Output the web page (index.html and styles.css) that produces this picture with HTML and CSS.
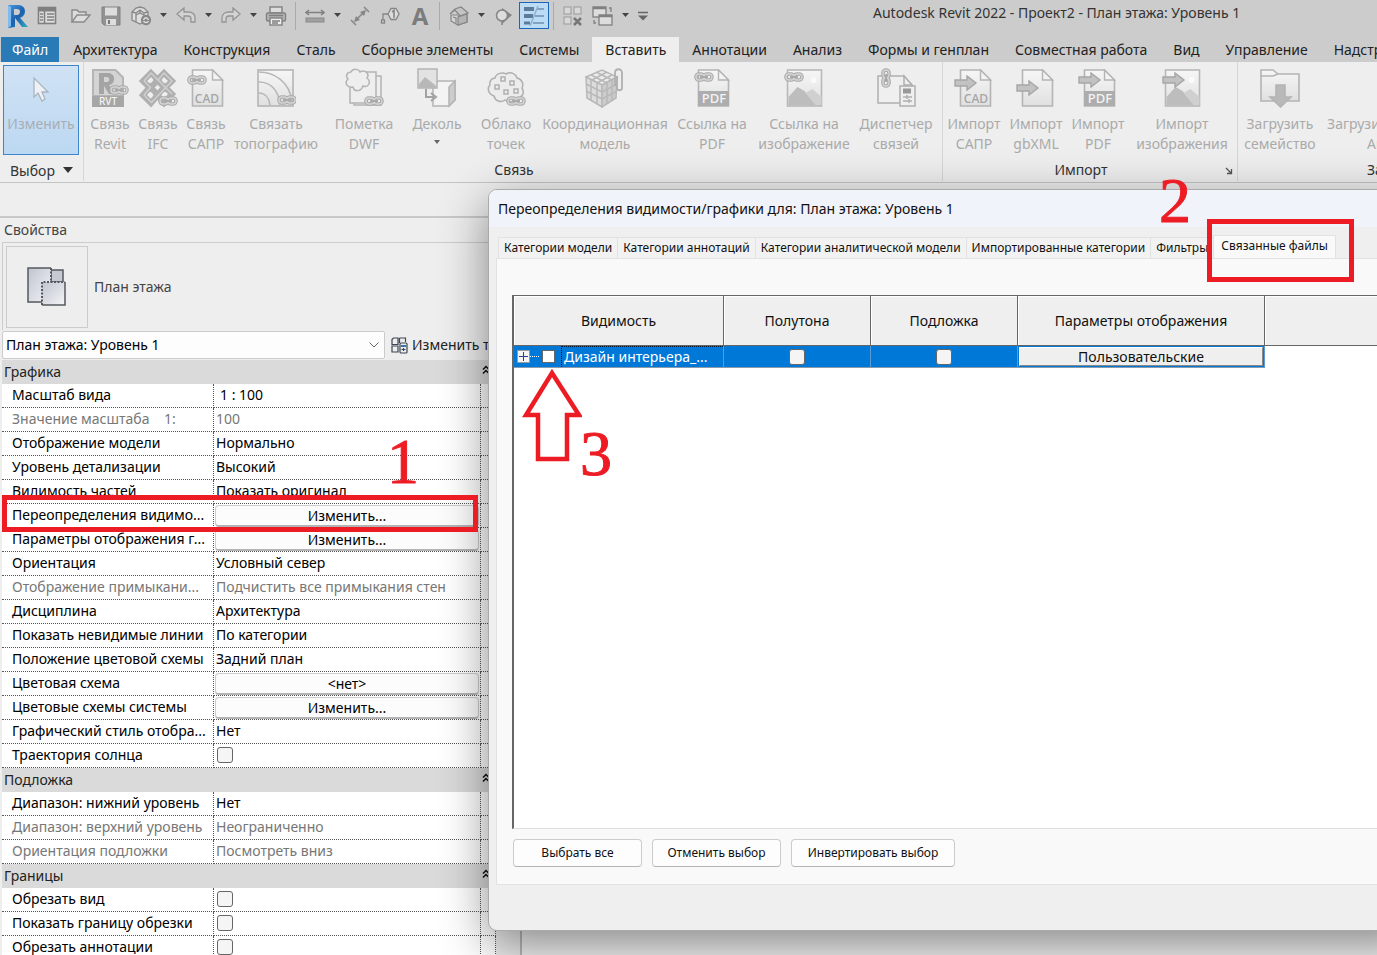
FILE: index.html
```html
<!DOCTYPE html>
<html lang="ru">
<head>
    <meta charset="UTF-8">
    <meta name="viewport" content="width=device-width, initial-scale=1.0">
    <title>Autodesk Revit 2022 - Проект2 - План этажа: Уровень 1</title>
    <link rel="stylesheet" href="styles.css">
</head>
<body>
    <!-- shared icon parts -->
    <svg class="defs" width="0" height="0">
        <defs>
            <linearGradient id="fade" x1="0" y1="0" x2="0" y2="1">
                <stop offset="0" stop-color="#f6f6f6"/>
                <stop offset="1" stop-color="#e0e0e0"/>
            </linearGradient>
            <linearGradient id="logo" x1="0" y1="0" x2="1" y2="1">
                <stop offset="0" stop-color="#4a9be0"/>
                <stop offset="0.5" stop-color="#1c5fae"/>
                <stop offset="1" stop-color="#2fb0c8"/>
            </linearGradient>
            <linearGradient id="plan" x1="0" y1="0" x2="1" y2="1">
                <stop offset="0" stop-color="#bfc4cf"/>
                <stop offset="1" stop-color="#f4f5f7"/>
            </linearGradient>
            <symbol id="chain" viewBox="0 0 20 10">
                <g fill="none" stroke="#aaa" stroke-width="3.6">
                    <rect x="2" y="2" width="8" height="6" rx="3"/>
                    <rect x="10" y="2" width="8" height="6" rx="3"/>
                </g>
                <g fill="none" stroke="#d4d4d4" stroke-width="1.4">
                    <rect x="2" y="2" width="8" height="6" rx="3"/>
                    <rect x="10" y="2" width="8" height="6" rx="3"/>
                </g>
                <path d="M6 5h8" stroke="#aaa" stroke-width="2"/>
            </symbol>
            <symbol id="page" viewBox="0 0 32 38">
                <path d="M1 1h20l10 10v26H1z" fill="url(#fade)" stroke="#b4b4b4" stroke-width="1.6"/>
                <path d="M21 1v10h10z" fill="#f3f3f3" stroke="#b4b4b4" stroke-width="1.4"/>
            </symbol>
            <symbol id="arrow-in" viewBox="0 0 24 16">
                <path d="M1 5h12V1l9 7-9 7v-4H1z" fill="#c2c2c2" stroke="#a6a6a6" stroke-width="1.4"/>
            </symbol>
            <symbol id="photo" viewBox="0 0 36 38">
                <rect x="1" y="1" width="34" height="36" fill="url(#fade)" stroke="#b8b8b8" stroke-width="1.6"/>
                <circle cx="27" cy="11" r="3" fill="#fafafa"/>
                <path d="M2 28l9-10 7 4 12 14H2z" fill="#bdbdbd"/>
                <path d="M19 24l7-4 9 8v8h-6z" fill="#d0d0d0"/>
            </symbol>
            <symbol id="down" viewBox="0 0 8 5">
                <path d="M0 0h7L3.500 4z" fill="#444"/>
            </symbol>
            <symbol id="fold" viewBox="0 0 8 10">
                <path d="M1 4.500l3-3 3 3M1 8.500l3-3 3 3" fill="none" stroke="#111" stroke-width="1.500"/>
            </symbol>
        </defs>
    </svg>

    <div class="app">
        <header class="titlebar">
            <div class="quick-access">
                <button class="qa" aria-label="Revit">
                    <svg width="24" height="26" viewBox="0 0 24 26"><path d="M3 2h10c5 0 7 3 7 6.500 0 3-2 5.500-5 6.300L23 24h-6l-7-9v9l-7 1z" fill="url(#logo)"/><path d="M9 6h3c2 0 3 1 3 2.700S14 12 12 12H9z" fill="#ccc"/><path d="M3 2l3 2v19l-3 2z" fill="#7fbbee"/></svg>
                </button>
                <button class="qa" aria-label="Начальная страница">
                    <svg width="20" height="20" viewBox="0 0 20 20" fill="none" stroke="#808080"><rect x="1.500" y="1.500" width="17" height="16" fill="#ddd" stroke-width="1.600"/><path d="M2 3.500h16" stroke-width="4"/><path d="M7.500 5v12M3 8h3M3 11h3M3 14h3M10 8h7M10 11h7M10 14h7" stroke-width="1.600"/></svg>
                </button>
                <button class="qa qa-gap" aria-label="Открыть">
                    <svg width="22" height="18" viewBox="0 0 22 18" fill="#ddd" stroke="#8a8a8a" stroke-width="1.400"><path d="M2 15V3h5l2 2h7v3"/><path d="M2 15L7 8h13l-6 7z"/></svg>
                </button>
                <button class="qa" aria-label="Сохранить">
                    <svg width="20" height="20" viewBox="0 0 20 20"><path d="M1 1h18v18H3l-2-2z" fill="#929292" stroke="#808080"/><rect x="4" y="1.500" width="12" height="8" fill="#ddd"/><rect x="5" y="13" width="10" height="6" fill="#ddd"/><rect x="7" y="14" width="2" height="4" fill="#777"/></svg>
                </button>
                <button class="qa" aria-label="Синхронизировать">
                    <svg width="22" height="20" viewBox="0 0 22 20" fill="#ddd" stroke="#888" stroke-width="1.300"><path d="M2 6l4-4 4-1 4 1 4 4v8l-8 4-8-4z"/><path d="M2 6l4 1 4-3 4 3 4-1M6 7v9M14 7v7M10 4v4M6 9l4-2 4 2"/><circle cx="16" cy="14" r="4.500" fill="#888"/><path d="M13.500 14c1-3 4-3 5 0M18.500 15c-1 2-4 2-5 0" fill="none" stroke="#ddd"/></svg>
                </button>
                <button class="qa-drop" aria-label="Список"><svg width="8" height="5"><use href="#down"/></svg></button>
                <button class="qa" aria-label="Отменить">
                    <svg width="20" height="18" viewBox="0 0 20 18"><path d="M1 7l7-6v4h4c4 0 7 2 7 6v4h-4v-3c0-2-1-3-3-3H8v4z" fill="#d4d4d4" stroke="#949494" stroke-width="1.300"/></svg>
                </button>
                <button class="qa-drop" aria-label="Список"><svg width="8" height="5"><use href="#down"/></svg></button>
                <button class="qa" aria-label="Повторить">
                    <svg width="20" height="18" viewBox="0 0 20 18"><path d="M19 7l-7-6v4H8c-4 0-7 2-7 6v4h4v-3c0-2 1-3 3-3h4v4z" fill="#d4d4d4" stroke="#949494" stroke-width="1.300"/></svg>
                </button>
                <button class="qa-drop" aria-label="Список"><svg width="8" height="5"><use href="#down"/></svg></button>
                <button class="qa" aria-label="Печать">
                    <svg width="22" height="20" viewBox="0 0 22 20" stroke="#808080" stroke-width="1.400"><rect x="5" y="1" width="12" height="6" fill="#ddd"/><rect x="1.500" y="7" width="19" height="8" rx="1.500" fill="#b5b5b5"/><rect x="5" y="12" width="12" height="7" fill="#eee"/><path d="M4 9.500h14M7 15h8M7 17h6"/></svg>
                </button>
                <span class="qa-sep"></span>
                <button class="qa" aria-label="Измерить">
                    <svg width="20" height="14" viewBox="0 0 20 14"><path d="M1 3.500h18M4 1L1 3.500 4 6M16 1l3 2.500L16 6" fill="none" stroke="#808080" stroke-width="1.500"/><rect x="1" y="9" width="18" height="4" fill="#a0a0a0" stroke="#8a8a8a"/></svg>
                </button>
                <button class="qa-drop" aria-label="Список"><svg width="8" height="5"><use href="#down"/></svg></button>
                <button class="qa" aria-label="Размер">
                    <svg width="20" height="20" viewBox="0 0 20 20" fill="none" stroke="#858585" stroke-width="1.500"><path d="M5 15L15 5M1 14l5 5M14 1l5 5"/><path d="M16 4l-6 2 4 4zM4 16l2-6 4 4z" fill="#858585" stroke="none"/></svg>
                </button>
                <button class="qa" aria-label="Марка по категории">
                    <svg width="20" height="18" viewBox="0 0 20 18" fill="none" stroke="#858585" stroke-width="1.300"><path d="M8 7H3v6"/><rect x="1.500" y="13" width="3" height="3"/><path d="M8 7l3-5.500h5L19 7l-3 5.500h-5z" fill="#ddd"/><path d="M12 5l2-1.500V11" stroke-width="1.600"/></svg>
                </button>
                <button class="qa qa-letter">A</button>
                <span class="qa-sep"></span>
                <button class="qa" aria-label="3D вид">
                    <svg width="20" height="20" viewBox="0 0 20 20" stroke="#858585" stroke-width="1.200"><path d="M2 9v6l7 4 9-3V9z" fill="#d4d4d4"/><path d="M1 8l5-5 6-2 7 6-8 3-5-6z" fill="#c4c4c4"/><path d="M9 19v-8l9-3v8z" fill="#b4b4b4"/><path d="M4 11l3 1v5" fill="none"/></svg>
                </button>
                <button class="qa-drop" aria-label="Список"><svg width="8" height="5"><use href="#down"/></svg></button>
                <button class="qa" aria-label="Разрез">
                    <svg width="18" height="18" viewBox="0 0 18 18"><path d="M7 1l10 7-10 9z" fill="#858585"/><circle cx="7" cy="8.500" r="5.500" fill="#ddd" stroke="#858585" stroke-width="1.500"/><path d="M7 14v4" stroke="#858585" stroke-width="1.500"/></svg>
                </button>
                <button class="qa qa-active" aria-label="Тонкие линии">
                    <svg width="22" height="20" viewBox="0 0 22 20"><path d="M1 3h10M1 10h9" stroke="#5c7a99" stroke-width="4"/><path d="M1 17h6" stroke="#5c7a99" stroke-width="3"/><path d="M14 3h7M12 10h9M10 17h11" stroke="#6d8fb0" stroke-width="1.500"/><path d="M15 0L7 20" stroke="#8fb0d0" stroke-width="1.500"/></svg>
                </button>
                <span class="qa-sep"></span>
                <button class="qa" aria-label="Закрыть неактивные">
                    <svg width="20" height="20" viewBox="0 0 20 20" fill="#d8d8d8" stroke="#999"><rect x="1" y="1" width="7" height="7"/><rect x="11" y="1" width="7" height="7"/><rect x="1" y="11" width="7" height="7"/><path d="M11 12l7 7M18 12l-7 7" stroke="#777" stroke-width="2.500"/></svg>
                </button>
                <button class="qa" aria-label="Переключить окна">
                    <svg width="22" height="20" viewBox="0 0 22 20" fill="#ddd" stroke="#808080" stroke-width="1.300"><rect x="1" y="1" width="13" height="10"/><path d="M1 2h13" stroke-width="2.500"/><rect x="7" y="9" width="13" height="10"/><path d="M7 10h13" stroke-width="2.500"/><path d="M17 2h2v4M2 14v3h2" fill="none"/></svg>
                </button>
                <button class="qa-drop" aria-label="Список"><svg width="8" height="5"><use href="#down"/></svg></button>
                <button class="qa-more" aria-label="Настройка панели"><svg width="12" height="10"><path d="M1 1.500h10" stroke="#666" stroke-width="1.500"/><path d="M1 4.500h10L6 9.500z" fill="#666"/></svg></button>
            </div>
            <div class="app-title">Autodesk Revit 2022 - Проект2 - План этажа: Уровень 1</div>
        </header>

        <nav class="ribbon-tabs">
            <button class="ribbon-tab file">Файл</button>
            <button class="ribbon-tab">Архитектура</button>
            <button class="ribbon-tab">Конструкция</button>
            <button class="ribbon-tab">Сталь</button>
            <button class="ribbon-tab">Сборные элементы</button>
            <button class="ribbon-tab">Системы</button>
            <button class="ribbon-tab current">Вставить</button>
            <button class="ribbon-tab">Аннотации</button>
            <button class="ribbon-tab">Анализ</button>
            <button class="ribbon-tab">Формы и генплан</button>
            <button class="ribbon-tab">Совместная работа</button>
            <button class="ribbon-tab">Вид</button>
            <button class="ribbon-tab">Управление</button>
            <button class="ribbon-tab">Надстройки</button>
        </nav>

        <section class="ribbon">
            <div class="panel panel-select">
                <button class="modify">
                    <svg width="20" height="28" viewBox="0 0 20 28"><path d="M3 2v19l4-4 4 8 3-2-3-7h6z" fill="#eef2f6" stroke="#a9b4bf" stroke-width="1.300"/></svg>
                    <span>Изменить</span>
                </button>
                <div class="panel-title">Выбор <svg width="10" height="8"><path d="M0 0h10L5 6z" fill="#333"/></svg></div>
            </div>

            <div class="panel panel-link">
                <div class="tools">
                    <button class="tool tool-s">
                        <svg width="40" height="40" viewBox="0 0 40 40"><path d="M2 1h24l8 8v29H2z" fill="#b5b5b5"/><path d="M4 3h21l7 7v17H4z" fill="#d4d4d4"/><path d="M9 5h9c8 0 8 11 1 12l6 9h-6l-5-8v8H9zM14 9v5h3c3 0 3-5 0-5z" fill="#a4a4a4" fill-rule="evenodd"/><rect x="2" y="28" width="32" height="11" fill="#a6a6a6"/><text x="18" y="37" class="icon-text on-dark" font-size="10">RVT</text><use href="#chain" x="19" y="17" width="20" height="10"/></svg>
                        <span>Связь<br>Revit</span>
                    </button>
                    <button class="tool tool-s">
                        <svg width="40" height="40" viewBox="0 0 40 40" fill="none"><g stroke="#b0b0b0" stroke-width="6"><path d="M13 5l7 7-8 8-7-7z"/><path d="M26 5l8 8-7 7-8-8z"/><path d="M12 19l8 8-7 8-8-8z"/><path d="M27 19l7 7-8 9-7-8z"/></g><path d="M6 13l7-8 21 21M20 12l6-7 8 8-21 22M12 20L6 27l7 7M6 13l7 7" stroke="#d0d0d0" stroke-width="1.400"/><use href="#chain" x="20" y="28" width="20" height="10"/></svg>
                        <span>Связь<br>IFC</span>
                    </button>
                    <button class="tool tool-s">
                        <svg width="40" height="40" viewBox="0 0 40 40"><use href="#page" x="5" y="1" width="33" height="38"/><use href="#chain" x="1" y="7" width="20" height="10"/><text x="21" y="35" class="icon-text" font-size="12">CAD</text></svg>
                        <span>Связь<br>САПР</span>
                    </button>
                    <button class="tool tool-xl">
                        <svg width="40" height="40" viewBox="0 0 40 40"><rect x="2" y="2" width="35" height="36" fill="url(#fade)" stroke="#b4b4b4" stroke-width="1.600"/><path d="M3 4c14 0 31 9 33 30M3 14c12 0 20 9 21 23M3 25c6 0 10 5 11 12" fill="none" stroke="#b8b8b8" stroke-width="1.600"/><use href="#chain" x="21" y="27" width="20" height="10"/></svg>
                        <span>Связать<br>топографию</span>
                    </button>
                    <button class="tool tool-l">
                        <svg width="40" height="40" viewBox="0 0 40 40" fill="#eee" stroke="#b4b4b4" stroke-width="1.500"><path d="M14 8h23v29H10V9z"/><path d="M8 4h24v31H6V20z"/><path d="M7 4c2-4 8-3 9 0 5-3 10 2 7 6 5 4 1 10-4 8-2 6-9 6-10 1-6 1-9-4-5-8-3-3-1-7 3-7z"/><use href="#chain" x="20" y="28" width="20" height="10"/></svg>
                        <span>Пометка<br>DWF</span>
                    </button>
                    <button class="tool tool-m">
                        <svg width="40" height="40" viewBox="0 0 40 40" stroke="#b4b4b4" stroke-width="1.500"><path d="M16 19l5-6h17v19l-6 6H16z" fill="#f3f3f3"/><path d="M32 19l6-6v19l-6 6z" fill="#ccc"/><rect x="1" y="1" width="19" height="19" fill="#e2e2e2"/><path d="M2 16l6-7 5 4 6 5v2H2z" fill="#b8b8b8" stroke="none"/><path d="M9 21v8h8M14 25l5 4-5 4" fill="none" stroke="#a2a2a2" stroke-width="2"/></svg>
                        <span>Деколь</span>
                        <svg width="8" height="5"><path d="M1 0h6L4 4z" fill="#666"/></svg>
                    </button>
                    <button class="tool tool-cloud">
                        <svg width="40" height="40" viewBox="0 0 40 40" fill="#ececec" stroke="#b0b0b0" stroke-width="1.500"><path d="M9 10c1-5 8-6 11-4 5-3 10 0 11 4 5 1 7 6 5 10 3 5 0 10-5 10-2 4-8 5-12 2-4 3-10 1-11-4-6-2-7-8-4-11-1-4 2-7 5-7z"/><path d="M15 9h4v4h-4zM24 13h4v4h-4zM9 17h4v4H9zM18 22h4v4h-4zM28 21h4v4h-4z"/><use href="#chain" x="20" y="28" width="20" height="10"/></svg>
                        <span>Облако<br>точек</span>
                    </button>
                    <button class="tool tool-coord">
                        <svg width="40" height="40" viewBox="0 0 40 40" stroke="#b8b8b8" stroke-width="1.500"><path d="M1 9l16-7 15 7-15 8z" fill="#ececec"/><path d="M1 9l16 8v22L2 30z" fill="#dcdcdc"/><path d="M32 9l-15 8v22l14-9z" fill="#ccc"/><path d="M6 7l16 8M11 4l16 8M27 7l-15 8M22 4L7 12M6 12v21M12 15v21M22 14v22M27 12v21M1 16l16 8 15-8M1 23l16 8 15-8" fill="none"/><path d="M32 8v12c0 3 5 3 5 0V5c0-5-7-5-7 0v13" fill="none" stroke="#b0b0b0" stroke-width="1.800"/></svg>
                        <span>Координационная<br>модель</span>
                    </button>
                    <button class="tool tool-xl">
                        <svg width="40" height="40" viewBox="0 0 40 40"><use href="#page" x="5" y="1" width="33" height="38"/><rect x="6" y="23" width="31" height="15" fill="#adadad"/><text x="22" y="35" class="icon-text on-dark" font-size="13">PDF</text><use href="#chain" x="2" y="4" width="20" height="10"/></svg>
                        <span>Ссылка на<br>PDF</span>
                    </button>
                    <button class="tool tool-xl">
                        <svg width="40" height="40" viewBox="0 0 40 40"><use href="#photo" x="2" y="1" width="37" height="38"/><use href="#chain" x="0" y="4" width="20" height="10"/></svg>
                        <span>Ссылка на<br>изображение</span>
                    </button>
                    <button class="tool tool-xl">
                        <svg width="40" height="40" viewBox="0 0 40 40" fill="#efefef" stroke="#b0b0b0" stroke-width="1.500"><path d="M2 8h26l8 9v18H2z"/><path d="M28 8v9h8z"/><rect x="24" y="18" width="15" height="20"/><path d="M27 23h8" stroke="#999" stroke-width="5"/><path d="M27 29h9M27 33h9M31 27v4M33 31v4"/><g transform="translate(15 0) rotate(90)"><use href="#chain" width="20" height="10"/></g></svg>
                        <span>Диспетчер<br>связей</span>
                    </button>
                </div>
                <div class="panel-title">Связь</div>
            </div>

            <div class="panel panel-import">
                <div class="tools">
                    <button class="tool tool-m">
                        <svg width="40" height="40" viewBox="0 0 40 40"><use href="#page" x="5" y="1" width="33" height="38"/><use href="#arrow-in" x="0" y="7" width="24" height="16"/><text x="22" y="35" class="icon-text" font-size="12">CAD</text></svg>
                        <span>Импорт<br>САПР</span>
                    </button>
                    <button class="tool tool-m">
                        <svg width="40" height="40" viewBox="0 0 40 40"><use href="#page" x="5" y="1" width="33" height="38"/><use href="#arrow-in" x="0" y="12" width="24" height="16"/></svg>
                        <span>Импорт<br>gbXML</span>
                    </button>
                    <button class="tool tool-m">
                        <svg width="40" height="40" viewBox="0 0 40 40"><use href="#page" x="5" y="1" width="33" height="38"/><rect x="6" y="23" width="31" height="15" fill="#adadad"/><text x="22" y="35" class="icon-text on-dark" font-size="13">PDF</text><use href="#arrow-in" x="0" y="4" width="24" height="16"/></svg>
                        <span>Импорт<br>PDF</span>
                    </button>
                    <button class="tool tool-photo">
                        <svg width="40" height="40" viewBox="0 0 40 40"><use href="#photo" x="2" y="1" width="37" height="38"/><use href="#arrow-in" x="0" y="4" width="24" height="16"/></svg>
                        <span>Импорт<br>изображения</span>
                    </button>
                </div>
                <div class="panel-title">Импорт</div>
                <button class="launcher" aria-label="Параметры импорта"><svg width="8" height="8"><path d="M1 1l5 5M6.500 2v4.500H2" fill="none" stroke="#555" stroke-width="1.300"/></svg></button>
            </div>

            <div class="panel panel-load">
                <div class="tools">
                    <button class="tool tool-l">
                        <svg width="40" height="40" viewBox="0 0 40 40" stroke="#b4b4b4" stroke-width="1.600"><path d="M1 33V2h12l5 4h21v27z" fill="url(#fade)"/><path d="M1 8h12l5-2" fill="none"/><path d="M16 17h9v12h6L20.500 39 10 29h6z" fill="#b9b9b9"/></svg>
                        <span>Загрузить<br>семейство</span>
                    </button>
                    <button class="tool tool-load">
                        <svg width="40" height="40" viewBox="0 0 40 40" stroke="#b4b4b4" stroke-width="1.600"><path d="M1 33V2h12l5 4h21v27z" fill="url(#fade)"/></svg>
                        <span>Загрузить семейство<br>Autodesk</span>
                    </button>
                </div>
                <div class="panel-title">Загрузка из библиотеки</div>
            </div>
        </section>

        <div class="options-bar"></div>

        <main class="workspace">
            <aside class="properties">
                <h2>Свойства</h2>
                <div class="type-box">
                    <div class="preview">
                        <svg width="40" height="40" viewBox="0 0 40 40" stroke="#55595f" stroke-width="1.500"><path d="M24 3h12v12H24z" fill="#c5c9d2"/><path d="M1 1h23v13h-9v22H1z" fill="url(#plan)" stroke="none"/><path d="M24 1H1v34h14" fill="none"/><rect x="15" y="15" width="23" height="23" fill="url(#plan)" stroke="none"/><path d="M38 15v23H15" fill="none"/><path d="M24 1v14M15 38V15h23" fill="none" stroke-dasharray="2 1.500" stroke-width="2"/></svg>
                    </div>
                    <span>План этажа</span>
                </div>
                <div class="type-row">
                    <select aria-label="Тип">
                        <option>План этажа: Уровень 1</option>
                    </select>
                    <button class="edit-type">
                        <svg width="17" height="17" viewBox="0 0 17 17" fill="#eee" stroke="#3c4654" stroke-width="1.200"><path d="M1 2.500L2.500 1H7v6.500H1zM8.500 1h6v4M1 9h6v6H1zM8.500 1v5"/><rect x="9" y="6" width="7" height="10" rx="1"/><path d="M10 9h5" stroke="#3673b5" stroke-width="2"/><path d="M10.500 12.500h4M12.500 11v3"/></svg>
                        <span>Изменить тип</span>
                    </button>
                </div>
                <table class="props">
                    <colgroup><col class="col-name"><col><col class="col-link"></colgroup>
                    <tbody>
                        <tr class="group"><th colspan="3">Графика<svg class="fold" width="8" height="10"><use href="#fold"/></svg></th></tr>
                        <tr><td>Масштаб вида</td><td class="indent">1 : 100</td><td></td></tr>
                        <tr class="off"><td>Значение масштаба &nbsp;&nbsp; 1:</td><td>100</td><td></td></tr>
                        <tr><td>Отображение модели</td><td>Нормально</td><td></td></tr>
                        <tr><td>Уровень детализации</td><td>Высокий</td><td></td></tr>
                        <tr><td>Видимость частей</td><td>Показать оригинал</td><td></td></tr>
                        <tr><td>Переопределения видимо...</td><td class="has-button"><button>Изменить...</button></td><td></td></tr>
                        <tr><td>Параметры отображения г...</td><td class="has-button"><button>Изменить...</button></td><td></td></tr>
                        <tr><td>Ориентация</td><td>Условный север</td><td></td></tr>
                        <tr class="off"><td>Отображение примыкани...</td><td>Подчистить все примыкания стен</td><td></td></tr>
                        <tr><td>Дисциплина</td><td>Архитектура</td><td></td></tr>
                        <tr><td>Показать невидимые линии</td><td>По категории</td><td></td></tr>
                        <tr><td>Положение цветовой схемы</td><td>Задний план</td><td></td></tr>
                        <tr><td>Цветовая схема</td><td class="has-button"><button>&lt;нет&gt;</button></td><td></td></tr>
                        <tr><td>Цветовые схемы системы</td><td class="has-button"><button>Изменить...</button></td><td></td></tr>
                        <tr><td>Графический стиль отобра...</td><td>Нет</td><td></td></tr>
                        <tr><td><label for="sun">Траектория солнца</label></td><td><input type="checkbox" id="sun"></td><td></td></tr>
                        <tr class="group"><th colspan="3">Подложка<svg class="fold" width="8" height="10"><use href="#fold"/></svg></th></tr>
                        <tr><td>Диапазон: нижний уровень</td><td>Нет</td><td></td></tr>
                        <tr class="off"><td>Диапазон: верхний уровень</td><td>Неограниченно</td><td></td></tr>
                        <tr class="off"><td>Ориентация подложки</td><td>Посмотреть вниз</td><td></td></tr>
                        <tr class="group"><th colspan="3">Границы<svg class="fold" width="8" height="10"><use href="#fold"/></svg></th></tr>
                        <tr><td><label for="crop">Обрезать вид</label></td><td><input type="checkbox" id="crop"></td><td></td></tr>
                        <tr><td><label for="crop-edge">Показать границу обрезки</label></td><td><input type="checkbox" id="crop-edge"></td><td></td></tr>
                        <tr><td><label for="crop-notes">Обрезать аннотации</label></td><td><input type="checkbox" id="crop-notes"></td><td></td></tr>
                    </tbody>
                </table>
            </aside>
            <div class="canvas"></div>
        </main>

        <div class="dialog" role="dialog" aria-labelledby="dialog-title">
            <h1 id="dialog-title">Переопределения видимости/графики для: План этажа: Уровень 1</h1>
            <div class="dialog-tabs">
                <button>Категории модели</button>
                <button>Категории аннотаций</button>
                <button>Категории аналитической модели</button>
                <button>Импортированные категории</button>
                <button>Фильтры</button>
                <button class="current">Связанные файлы</button>
            </div>
            <div class="dialog-page">
                <div class="grid-box">
                    <table class="links">
                        <colgroup><col class="col-visible"><col class="col-check"><col class="col-check"><col class="col-display"><col></colgroup>
                        <thead>
                            <tr><th>Видимость</th><th>Полутона</th><th>Подложка</th><th>Параметры отображения</th><th></th></tr>
                        </thead>
                        <tbody>
                            <tr>
                                <td>
                                    <div class="tree">
                                        <button class="expand" aria-label="Развернуть"><svg width="13" height="13"><rect x=".5" y=".5" width="12" height="12" fill="#f4f4f4" stroke="#9a9a9a"/><path d="M2 6.500h9M6.500 2v9" stroke="#2b3f8c"/></svg></button>
                                        <span class="branch"></span>
                                        <input type="checkbox" id="link-visible">
                                        <label for="link-visible">Дизайн интерьера_...</label>
                                    </div>
                                </td>
                                <td><input type="checkbox" aria-label="Полутона"></td>
                                <td><input type="checkbox" aria-label="Подложка"></td>
                                <td class="display"><button>Пользовательские</button></td>
                                <td class="rest"></td>
                            </tr>
                        </tbody>
                    </table>
                </div>
                <div class="dialog-buttons">
                    <button>Выбрать все</button>
                    <button>Отменить выбор</button>
                    <button class="wide">Инвертировать выбор</button>
                </div>
            </div>
        </div>

        <!-- step marks drawn over the windows -->
        <div class="frame frame-1"></div>
        <div class="frame frame-2"></div>
        <span class="step step-1">1</span>
        <span class="step step-2">2</span>
        <span class="step step-3">3</span>
        <svg class="pointer" width="60" height="94" viewBox="0 0 60 94"><path d="M30 4l27 42H45v44H16V46H4z" fill="none" stroke="#ed1c24" stroke-width="4.500"/></svg>
    </div>
</body>
</html>
```

FILE: styles.css
```css
* {
    box-sizing: border-box;
}
body {
    margin: 0;
    font-family: "Noto Sans", "Open Sans", sans-serif;
    font-size: 14px;
    line-height: 20px;
    color: #222;
    background-color: #eee;
}
button {
    font: inherit;
    color: inherit;
    background: none;
    border: none;
    padding: 0;
    white-space: nowrap;
}
svg {
    flex-shrink: 0;
}
.defs {
    position: absolute;
}
.app {
    position: relative;
    display: flex;
    flex-direction: column;
    height: 100vh;
    overflow: hidden;
}

/* title bar */
.titlebar {
    display: flex;
    flex-shrink: 0;
    height: 37px;
    background-color: #ccc;
    white-space: nowrap;
}
.quick-access {
    display: flex;
    align-items: center;
    flex-shrink: 0;
    height: 31px;
    padding-left: 2px;
}
.qa,
.qa-drop,
.qa-more {
    display: flex;
    align-items: center;
    justify-content: center;
    flex-shrink: 0;
    height: 27px;
}
.qa {
    width: 30px;
}
.qa-gap {
    margin-left: 4px;
}
.qa-drop {
    width: 15px;
}
.qa-more {
    width: 20px;
}
.qa-letter {
    font-size: 24px;
    font-weight: bold;
    color: #7c7c7c;
}
.qa-active {
    background-color: #bcdcf6;
    border: 1px solid #1a66b8;
}
.qa-sep {
    width: 1px;
    height: 28px;
    margin: 0 4px;
    background-color: #aaa;
}
.app-title {
    flex: 1;
    padding: 3px 0 0 220px;
    color: #333;
}

/* ribbon */
.ribbon-tabs {
    display: flex;
    flex-shrink: 0;
    height: 25px;
    padding-left: 1px;
    background-color: #ccc;
}
.ribbon-tab {
    flex-shrink: 0;
    padding: 0 13px;
}
.ribbon-tab.file {
    padding: 0 11px;
    margin-right: 1px;
    color: #fff;
    background-color: #2a7ab5;
}
.ribbon-tab.current {
    background-color: #eee;
}
.ribbon {
    display: flex;
    flex-shrink: 0;
    height: 121px;
    background-color: #eee;
    border-bottom: 1px solid #c4c4c4;
}
.panel {
    position: relative;
    display: flex;
    flex-direction: column;
    flex-shrink: 0;
    justify-content: space-between;
    margin-bottom: 1px;
    padding-top: 6px;
    border-right: 1px solid #d6d6d6;
}
.panel-select {
    width: 84px;
    padding: 3px 4px 0 3px;
}
.panel-link {
    padding-left: 2px;
}
.panel-import {
    padding-right: 2px;
}
.modify {
    display: flex;
    flex-direction: column;
    align-items: center;
    gap: 10px;
    height: 90px;
    padding-top: 10px;
    color: #a8aeb4;
    background-image: linear-gradient(#d0e2f4, #bcd8f2);
    border: 1px solid #3e86cc;
}
.panel-title {
    height: 21px;
    text-align: center;
    white-space: nowrap;
    color: #333;
}
.panel-select .panel-title {
    display: flex;
    align-items: center;
    gap: 8px;
    padding-left: 7px;
}
.panel-import .panel-title {
    padding-right: 16px;
}
.panel-load .panel-title {
    padding-left: 129px;
    text-align: left;
}
.tools {
    display: flex;
}
.tool {
    display: flex;
    flex-direction: column;
    align-items: center;
    gap: 6px;
    color: #aaa;
}
.tool span {
    display: block;
}
.tool-s {
    width: 48px;
}
.tool-m {
    width: 62px;
}
.tool-cloud {
    width: 76px;
}
.tool-l {
    width: 84px;
}
.tool-xl {
    width: 92px;
}
.tool-photo {
    width: 106px;
}
.tool-coord {
    width: 122px;
}
.tool-load {
    width: 152px;
}
.icon-text {
    font-weight: 500;
    text-anchor: middle;
    fill: #a4a4a4;
}
.icon-text.on-dark {
    fill: #f4f4f4;
}
.launcher {
    position: absolute;
    right: 4px;
    bottom: 6px;
    line-height: 8px;
}
.options-bar {
    flex-shrink: 0;
    height: 35px;
    border-bottom: 2px solid #c8c8c8;
}

/* properties palette */
.workspace {
    display: flex;
    flex: 1;
    min-height: 0;
}
.properties {
    width: 496px;
    flex-shrink: 0;
    overflow: hidden;
}
.properties h2 {
    margin: 0 0 0 2px;
    padding: 2px;
    height: 24px;
    font-size: 14px;
    font-weight: normal;
    color: #444;
}
.type-box {
    display: flex;
    align-items: center;
    gap: 6px;
    height: 88px;
    margin-left: 2px;
    padding-left: 3px;
    border: 1px solid #ccc;
    border-width: 1px 0 0 1px;
    color: #444;
}
.preview {
    display: flex;
    align-items: center;
    justify-content: center;
    width: 82px;
    height: 82px;
    border: 1px solid #ccc;
}
.type-row {
    display: flex;
    align-items: center;
    gap: 6px;
    margin: 1px 0 1px 2px;
}
.type-row select {
    flex-shrink: 0;
    width: 383px;
    height: 28px;
    padding: 0 3px;
    font: inherit;
    color: #000;
    appearance: none;
    background: #fdfdfd url("data:image/svg+xml,%3Csvg xmlns='http://www.w3.org/2000/svg' width='10' height='6'%3E%3Cpath d='M.5.5L5 5 9.500.5' fill='none' stroke='%23666'/%3E%3C/svg%3E") no-repeat right 5px center;
    border: 1px solid #ccc;
    border-radius: 2px;
}
.edit-type {
    display: flex;
    align-items: center;
    gap: 4px;
}
.props {
    width: 494px;
    margin-left: 2px;
    table-layout: fixed;
    border-collapse: separate;
    border-spacing: 0;
    color: #000;
    background-color: #fff;
}
.col-name {
    width: 212px;
}
.col-link {
    width: 15px;
}
.props td,
.props th {
    height: 24px;
    padding: 0 2px;
    overflow: hidden;
    white-space: nowrap;
    text-align: left;
    font-weight: normal;
}
.props td {
    padding-bottom: 2px;
    border-right: 1px dotted #555;
    border-bottom: 1px dotted #555;
}
.props td:first-child {
    padding-left: 10px;
    padding-right: 0;
}
.props .indent {
    padding-left: 6px;
}
.props th {
    color: #222;
    background-color: #dadada;
}
.props .off {
    color: #777;
}
.fold {
    float: right;
    margin: 3px 4px 0 0;
}
.props .has-button {
    padding: 0 1px;
}
.props button {
    display: block;
    width: 100%;
    height: 22px;
    background-color: #fcfcfc;
    border: 1px solid #ccc;
    border-bottom: 2px solid #b4b4b4;
    border-radius: 4px;
}
input[type="checkbox"] {
    display: block;
    width: 16px;
    height: 16px;
    margin: 0 1px;
    appearance: none;
    background-color: #f5f5f5;
    border: 1px solid #666;
    border-radius: 3px;
}
.canvas {
    flex: 1;
    margin-left: 24px;
    border-left: 2px solid #bbb;
    background-color: #f4f4f4;
}

/* visibility dialog */
.dialog {
    position: absolute;
    left: 488px;
    right: -40px;
    top: 189px;
    padding-bottom: 45px;
    background-color: #efefef;
    border: 1px solid #aaa;
    border-radius: 9px;
    box-shadow: 0 14px 48px rgba(0, 0, 0, 0.45);
    color: #111;
}
.dialog h1 {
    height: 37px;
    margin: 0;
    padding: 9px;
    font-size: 14px;
    font-weight: normal;
    background-color: #f1f3fa;
    border-radius: 8px 0 0 0;
}
.dialog-tabs {
    display: flex;
    align-items: flex-end;
    height: 31px;
    padding-left: 9px;
    font-size: 12px;
}
.dialog-tabs button {
    height: 21px;
    padding: 0 5px;
    background-color: #f2f2f2;
    border: 1px solid #e2e2e2;
    border-width: 1px 0 0 1px;
}
.dialog-tabs .current {
    height: 23px;
    padding: 0 7px 2px;
    background-color: #f9f9f9;
    border-right-width: 1px;
}
.dialog-page {
    margin-left: 7px;
    padding: 36px 0 17px 15px;
    background-color: #f9f9f9;
    border: 1px solid #e2e2e2;
}
.grid-box {
    height: 534px;
    background-color: #fff;
    border: 1px solid #666;
    border-width: 1px 0 1px 2px;
    border-bottom-color: #ddd;
}
.links {
    width: 100%;
    table-layout: fixed;
    border-collapse: separate;
    border-spacing: 0;
}
.col-visible {
    width: 210px;
}
.col-check {
    width: 147px;
}
.col-display {
    width: 247px;
}
.links th {
    height: 50px;
    padding: 0;
    font-weight: normal;
    background-color: #efefef;
    border-right: 1px solid #666;
    border-bottom: 1px solid #666;
    box-shadow: inset 1px 1px #fff;
}
.links td {
    height: 22px;
    padding: 0;
    background-color: #0078d7;
    border-right: 1px solid #5a9bd5;
    border-bottom: 1px solid #8a9bab;
}
.links td > input {
    margin: 0 auto;
}
.links .rest {
    background-color: #fff;
    border: none;
}
.tree {
    display: flex;
    align-items: center;
    height: 21px;
    padding-left: 3px;
    color: #fff;
}
.expand {
    line-height: 0;
}
.branch {
    width: 9px;
    border-top: 1px dotted #fff;
}
.tree input {
    width: 13px;
    height: 13px;
    margin: 0 6px 0 3px;
    background-color: #fff;
    border-radius: 0;
}
.tree label {
    flex: 1;
    height: 21px;
    padding-left: 2px;
    border: 1px dotted #012;
    border-width: 1px 0 0 1px;
}
.links .display {
    padding: 0 1px;
}
.display button {
    display: block;
    width: 100%;
    height: 19px;
    line-height: 16px;
    background-color: #efefef;
    border: 1px solid #fff;
    border-right-color: #888;
    border-bottom-color: #888;
}
.dialog-buttons {
    display: flex;
    gap: 10px;
    margin-top: 10px;
    padding-left: 1px;
    font-size: 12px;
}
.dialog-buttons button {
    width: 129px;
    height: 28px;
    background-color: #fdfdfd;
    border: 1px solid #ccc;
    border-bottom-color: #b4b4b4;
    border-radius: 4px;
}
.dialog-buttons .wide {
    width: 164px;
}

/* step marks */
.frame {
    position: absolute;
    border: 5px solid #ed1c24;
}
.frame-1 {
    left: 2px;
    top: 495px;
    width: 476px;
    height: 37px;
}
.frame-2 {
    left: 1207px;
    top: 219px;
    width: 147px;
    height: 63px;
}
.step {
    position: absolute;
    font-family: "Liberation Serif", serif;
    font-size: 64px;
    line-height: 64px;
    color: #ed1c24;
    -webkit-text-stroke: 1px #ed1c24;
}
.step-1 {
    left: 387px;
    top: 430px;
}
.step-2 {
    left: 1159px;
    top: 169px;
}
.step-3 {
    left: 580px;
    top: 422px;
}
.pointer {
    position: absolute;
    left: 522px;
    top: 369px;
}
```
